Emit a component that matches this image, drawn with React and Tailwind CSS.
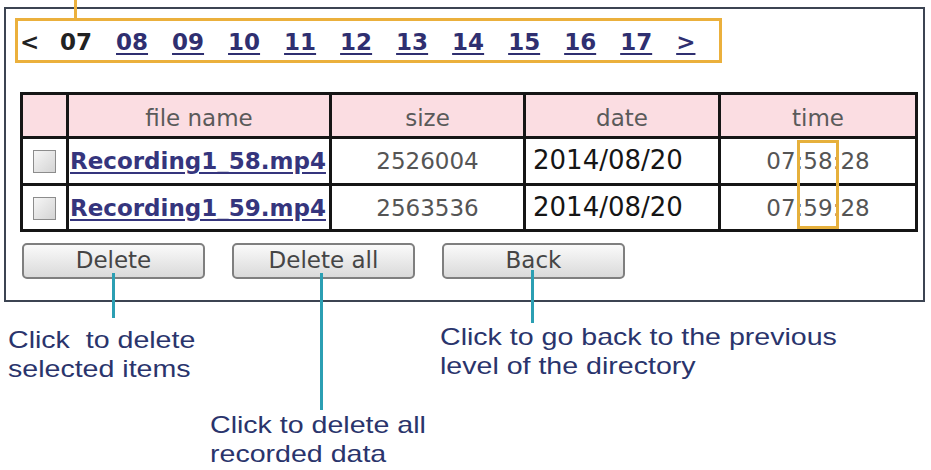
import React from "react";

const navLinks = ["08", "09", "10", "11", "12", "13", "14", "15", "16", "17"];

const rows = [
  { name: "Recording1_58.mp4", size: "2526004", date: "2014/08/20", time: "07:58:28" },
  { name: "Recording1_59.mp4", size: "2563536", date: "2014/08/20", time: "07:59:28" },
];

function Checkbox() {
  return (
    <span className="inline-block w-[23px] h-[23px] border border-[#8c8c8c] bg-gradient-to-br from-[#f6f6f6] to-[#d4d4d4] align-middle" />
  );
}

function Btn({ children }) {
  return (
    <button className="w-[183px] h-[36px] rounded-[5px] border-2 border-[#7f7f7f] bg-gradient-to-b from-[#fafafa] to-[#dadada] text-[23px] leading-none text-[#454545] font-['DejaVu_Sans',Verdana,sans-serif]">
      {children}
    </button>
  );
}

function Note({ children, className }) {
  return (
    <div className={className}>
      <div className="origin-left scale-x-[1.19] text-[24px] leading-[29px] text-[#2a346c] font-['Liberation_Sans',Arial,sans-serif] whitespace-pre">
        {children}
      </div>
    </div>
  );
}

export default function App() {
  return (
    <div className="relative w-[931px] h-[470px] overflow-hidden bg-white pt-[7px]">
      {/* panel */}
      <div className="ml-[4px] w-[921px] border-2 border-[#3c4452] bg-white pb-[21px] font-['DejaVu_Sans',Verdana,sans-serif]">
        {/* nav */}
        <div className="ml-[9px] mt-[9px] w-[707px] h-[45px] border-[3px] border-[#ebb03c] flex items-center gap-[24px] pl-[2px] pt-[3px] text-[23px] font-bold leading-none">
          <span className="w-[16px] text-[#222]">&lt;</span>
          <span className="text-[#222]">07</span>
          {navLinks.map((n) => (
            <a key={n} className="text-[#2f2f70] underline underline-offset-[3px]">
              {n}
            </a>
          ))}
          <a className="text-[#2f2f70] underline underline-offset-[3px]">&gt;</a>
        </div>

        {/* table */}
        <table className="ml-[14px] mt-[29px] w-[895px] table-fixed border-collapse border-[3px] border-[#151515] text-[23px]">
          <colgroup>
            <col className="w-[46px]" />
            <col className="w-[263px]" />
            <col className="w-[194px]" />
            <col className="w-[195px]" />
            <col className="w-[197px]" />
          </colgroup>
          <thead>
            <tr className="h-[43px] bg-[#fbdde2] text-[#5a5a5a]">
              <th className="border-[3px] border-[#151515] font-normal pt-[6px] pb-0"></th>
              <th className="border-[3px] border-[#151515] font-normal pt-[6px] pb-0">file name</th>
              <th className="border-[3px] border-[#151515] font-normal pt-[6px] pb-0">size</th>
              <th className="border-[3px] border-[#151515] font-normal pt-[6px] pb-0">date</th>
              <th className="border-[3px] border-[#151515] font-normal pt-[6px] pb-0">time</th>
            </tr>
          </thead>
          <tbody>
            {rows.map((r, i) => (
              <tr key={r.name} className={i === 0 ? "h-[47px]" : "h-[46px]"}>
                <td className="border-[3px] border-[#151515] text-center p-0">
                  <Checkbox />
                </td>
                <td className="border-[3px] border-[#151515] pl-[1px] pr-0 pt-[2px] whitespace-nowrap overflow-visible">
                  <a className="font-bold text-[#35357d] underline underline-offset-[3px]">{r.name}</a>
                </td>
                <td className="border-[3px] border-[#151515] text-center text-[#555] pt-[2px]">{r.size}</td>
                <td className="border-[3px] border-[#151515] align-top pt-[6px] pl-[7px] text-[26px] leading-[30px] text-[#151515]">
                  {r.date}
                </td>
                <td className="border-[3px] border-[#151515] text-center text-[#555] pt-[2px]">{r.time}</td>
              </tr>
            ))}
          </tbody>
        </table>

        {/* buttons */}
        <div className="ml-[16px] mt-[11px] flex gap-[27px]">
          <Btn>Delete</Btn>
          <Btn>Delete all</Btn>
          <Btn>Back</Btn>
        </div>
      </div>

      {/* annotations */}
      <div className="flex items-start">
        <Note className="ml-[8px] w-[202px] mt-[23px]">{"Click  to delete\nselected items"}</Note>
        <Note className="w-[230px] mt-[108px]">{"Click to delete all\nrecorded data"}</Note>
        <Note className="mt-[20px]">{"Click to go back to the previous\nlevel of the directory"}</Note>
      </div>

      {/* overlays: callout lines and highlight */}
      <div className="absolute left-[74px] top-0 w-[3px] h-[19px] bg-[#ebb03c]" />
      <div className="absolute left-[797px] top-[140px] w-[42px] h-[89px] border-[3px] border-[#e6b03c]" />
      <div className="absolute left-[112px] top-[273px] w-[3px] h-[45px] bg-[#2b9fb3]" />
      <div className="absolute left-[320px] top-[273px] w-[3px] h-[137px] bg-[#2b9fb3]" />
      <div className="absolute left-[531px] top-[270px] w-[3px] h-[53px] bg-[#2b9fb3]" />
    </div>
  );
}
